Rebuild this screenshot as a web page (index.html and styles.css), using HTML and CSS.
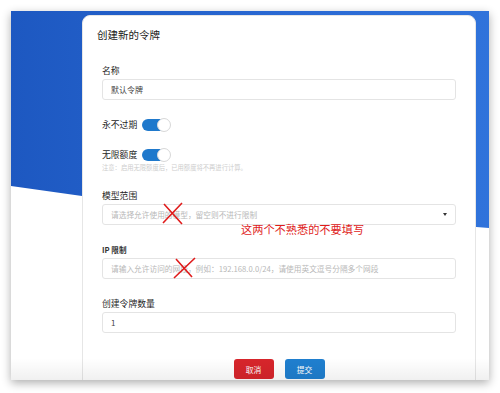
FILE: index.html
```html
<!DOCTYPE html>
<html lang="zh">
  <head>
    <meta charset="UTF-8" />
    <title>创建新的令牌</title>
    <link rel="stylesheet" href="styles.css">
  </head>
  <body>
    <div class="window">
      <div class="modal">
        <div class="modal-header">创建新的令牌</div>

        <div class="modal-body">
          <div class="field">
            <label class="label">名称</label>
            <div class="input">默认令牌</div>
          </div>

          <div class="switch-row first">
            <span class="label">永不过期</span>
            <span class="switch"><span class="knob"></span></span>
          </div>

          <div class="switch-row">
            <span class="label">无限额度</span>
            <span class="switch"><span class="knob"></span></span>
          </div>
          <div class="note">注意：启用无限额度后，已用额度将不再进行计算。</div>

          <div class="field wide">
            <label class="label">模型范围</label>
            <div class="input select">
              <span class="placeholder">请选择允许使用的模型，留空则不进行限制</span>
              <span class="caret"></span>
            </div>
          </div>

          <div class="field">
            <label class="label small">IP 限制</label>
            <div class="input">
              <span class="placeholder">请输入允许访问的网段，例如：192.168.0.0/24，请使用英文逗号分隔多个网段</span>
            </div>
          </div>

          <div class="field">
            <label class="label">创建令牌数量</label>
            <div class="input">1</div>
          </div>

          <div class="actions">
            <button class="btn btn-cancel">取消</button>
            <button class="btn btn-submit">提交</button>
          </div>
        </div>

        <!-- 标注 -->
        <svg class="mark mark-1" width="24" height="24" viewBox="0 0 24 24">
          <path d="M3 2 L21 22 M21 1 L2 21" stroke="#e01b1b" stroke-width="1.6" fill="none" />
        </svg>
        <svg class="mark mark-2" width="24" height="24" viewBox="0 0 24 24">
          <path d="M3 2 L19 20 M22 1 L1 21" stroke="#e01b1b" stroke-width="1.6" fill="none" />
        </svg>
        <div class="annotation">这两个不熟悉的不要填写</div>
      </div>
    </div>
  </body>
</html>
```

FILE: styles.css
```css
* {
  margin: 0;
  padding: 0;
  box-sizing: border-box;
}

body {
  font-family: "Noto Sans CJK SC", "Noto Sans", sans-serif;
  background-color: #fff;
  padding: 11px;
  width: 500px;
  height: 393px;
  overflow: hidden;
}

.window {
  position: relative;
  width: 478px;
  height: 369px;
  background-color: #fff;
  box-shadow: 0 3px 9px rgba(0, 0, 0, 0.32);
  overflow: hidden;
}

.window::before {
  content: "";
  position: absolute;
  top: 0;
  left: 0;
  width: 100%;
  height: 220px;
  background: linear-gradient(90deg, #1d58c1 0%, #2b6ad4 60%, #3073db 100%);
  clip-path: polygon(0 0, 100% 0, 100% 217px, 71px 185px, 0 175px);
}

.window::after {
  content: "";
  position: absolute;
  left: 0;
  right: 0;
  bottom: 0;
  height: 22px;
  background: linear-gradient(rgba(0, 0, 0, 0), rgba(0, 0, 0, 0.06));
  pointer-events: none;
}

.modal {
  position: relative;
  margin: 4px 0 0 71px;
  width: 394px;
  height: 370px;
  background-color: #fff;
  border: 1px solid #e6e6e6;
  border-radius: 8px 8px 0 0;
}

.modal-header {
  padding: 12px 0 0 14px;
  font-size: 10.5px;
  line-height: 14px;
  color: #1a1a1a;
}

.modal-body {
  padding: 0 19px 0 19px;
}

.label {
  display: block;
  font-size: 8.8px;
  line-height: 12px;
  color: #1f1f1f;
}

.label.small {
  font-size: 7.6px;
  font-weight: bold;
  color: #333;
}

.field {
  margin-top: 19px;
}

.modal-body > .field:first-child {
  margin-top: 23px;
}

.field.wide {
  margin-top: 18px;
}

.input {
  margin-top: 2px;
  height: 21px;
  border: 1px solid #e4e4e4;
  border-radius: 3px;
  padding: 0 8px;
  display: flex;
  align-items: center;
  font-size: 8px;
  color: #444;
}

.placeholder {
  color: #b8b8b8;
  font-size: 7.7px;
  white-space: nowrap;
}

.select {
  justify-content: space-between;
}

.caret {
  width: 0;
  height: 0;
  border-left: 2.5px solid transparent;
  border-right: 2.5px solid transparent;
  border-top: 3px solid #333;
}

.switch-row {
  display: flex;
  align-items: center;
  gap: 5px;
  margin-top: 16px;
  height: 14px;
}

.switch-row.first {
  margin-top: 18px;
}

.switch-row .label {
  display: inline;
}

.switch {
  position: relative;
  width: 28px;
  height: 12px;
  border-radius: 6px;
  background-color: #1f79cc;
}

.knob {
  position: absolute;
  top: -1px;
  right: -1px;
  width: 14px;
  height: 14px;
  border-radius: 50%;
  background-color: #fff;
  border: 1px solid #d8d8d8;
}

.note {
  margin-top: 1px;
  font-size: 6.3px;
  line-height: 9px;
  color: #cdcdcd;
  white-space: nowrap;
}

.actions {
  display: flex;
  justify-content: center;
  gap: 11px;
  margin-top: 26px;
}

.btn {
  width: 40px;
  height: 20px;
  border: none;
  border-radius: 3px;
  color: #fff;
  font-family: inherit;
  font-size: 7.8px;
}

.btn-cancel {
  background-color: #d7252b;
}

.btn-submit {
  background-color: #1f7fcf;
}

.mark {
  position: absolute;
}

.mark-1 {
  left: 78px;
  top: 186px;
}

.mark-2 {
  left: 90px;
  top: 241px;
}

.annotation {
  position: absolute;
  left: 158px;
  top: 206px;
  font-size: 11.2px;
  line-height: 14px;
  color: #e01b1b;
  white-space: nowrap;
}
```
